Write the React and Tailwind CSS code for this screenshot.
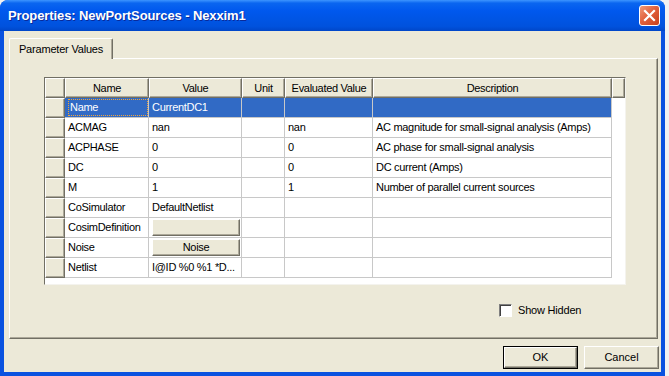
import React from "react";

const rows = [
  { name: "Name", value: "CurrentDC1", evald: "", desc: "", selected: true },
  { name: "ACMAG", value: "nan", evald: "nan", desc: "AC magnitude for small-signal analysis (Amps)" },
  { name: "ACPHASE", value: "0", evald: "0", desc: "AC phase for small-signal analysis" },
  { name: "DC", value: "0", evald: "0", desc: "DC current (Amps)" },
  { name: "M", value: "1", evald: "1", desc: "Number of parallel current sources" },
  { name: "CoSimulator", value: "DefaultNetlist", evald: "", desc: "" },
  { name: "CosimDefinition", button: "", evald: "", desc: "" },
  { name: "Noise", button: "Noise", evald: "", desc: "" },
  { name: "Netlist", value: "I@ID %0 %1 *D...", evald: "", desc: "" },
];

const headers = ["Name", "Value", "Unit", "Evaluated Value", "Description"];

// raised 3d cell like the old win32 grid headers
const Raised = ({ children, className = "" }) => (
  <div
    className={
      "bg-[#ECE9D8] border-t border-l border-t-white border-l-white border-b border-r border-b-[#716F64] border-r-[#716F64] shadow-[inset_-1px_-1px_0_#ACA899] " +
      className
    }
  >
    {children}
  </div>
);

const Cell = ({ children, sel, className = "" }) => (
  <div
    className={
      "h-[20px] border-r border-b flex items-center pl-[3px] whitespace-nowrap overflow-hidden " +
      (sel ? "bg-[#316AC5] text-white border-[#C8C8C8]" : "bg-white border-[#C8C8C8]") +
      " " +
      className
    }
  >
    {children}
  </div>
);

const Grid = () => (
  <div className="w-[582px] h-[208px] bg-white border-t border-l border-t-[#716F64] border-l-[#716F64] border-b border-r border-b-[#F4F3EE] border-r-[#F4F3EE]">
    <div className="grid grid-cols-[20px_84px_93px_43px_88px_239px_13px] text-[11px] leading-none tracking-[-0.3px]">
      <Raised className="h-[20px]" />
      {headers.map((h) => (
        <Raised key={h} className="h-[20px] flex items-center justify-center">
          {h}
        </Raised>
      ))}
      <Raised className="h-[20px]" />
      {rows.map((r) => (
        <React.Fragment key={r.name}>
          <Raised className="h-[20px]" />
          <Cell sel={r.selected} className={r.selected ? "pl-[1px]" : ""}>
            {r.selected ? (
              <span className="h-[17px] w-[81px] border border-dotted border-[#F2A53A] flex items-center pl-[1px]">
                {r.name}
              </span>
            ) : (
              r.name
            )}
          </Cell>
          {r.button !== undefined ? (
            <Cell className="pl-[3px]">
              <Raised className="w-[88px] h-[17px] flex items-center justify-center">
                {r.button}
              </Raised>
            </Cell>
          ) : (
            <Cell sel={r.selected}>{r.value}</Cell>
          )}
          <Cell sel={r.selected} />
          <Cell sel={r.selected}>{r.evald}</Cell>
          <Cell sel={r.selected}>{r.desc}</Cell>
          <div className="h-[20px] bg-white" />
        </React.Fragment>
      ))}
    </div>
  </div>
);

const Button = ({ children, def }) => (
  <div
    className={
      "w-[75px] h-[23px] flex items-center justify-center text-[11px] " +
      (def ? "border border-black" : "")
    }
  >
    <Raised className="w-full h-full flex items-center justify-center">{children}</Raised>
  </div>
);

export default function App() {
  return (
    <div
      className="w-[669px] h-[376px] bg-[#F2F2F2] flex text-black"
      style={{ fontFamily: '"Liberation Sans", Arial, sans-serif' }}
    >
      <div className="w-[665px] h-[376px] flex flex-col rounded-t-[8px] overflow-hidden bg-[#0A52E0]">
        {/* title bar */}
        <div className="h-[31px] flex items-center pl-[8px] pr-[5px] bg-[linear-gradient(to_bottom,#3D95FF_0%,#0A66F0_10%,#0058EE_35%,#0055E5_60%,#0052DD_85%,#0046C8_100%)]">
          <div className="text-white font-bold text-[13px] [text-shadow:1px_1px_0_#0A2A9A] tracking-[-0.1px]">
            Properties: NewPortSources - Nexxim1
          </div>
          <div className="ml-auto w-[21px] h-[21px] rounded-[3px] border border-white bg-[linear-gradient(135deg,#F09A7A_0%,#E2623E_45%,#C8401C_100%)] flex items-center justify-center">
            <svg width="13" height="13" viewBox="0 0 13 13">
              <path d="M2 2 L11 11 M11 2 L2 11" stroke="white" strokeWidth="2.2" strokeLinecap="square" />
            </svg>
          </div>
        </div>
        {/* client */}
        <div className="flex-1 mx-[4px] mb-[4px] bg-[#ECE9D8] flex flex-col pl-[5px] pt-[7px]">
          <div className="flex">
            <div className="w-[104px] h-[21px] border-t border-l border-white border-r border-r-[#716F64] shadow-[inset_-1px_0_0_#ACA899] rounded-t-[2px] flex items-center justify-center text-[11px] tracking-[-0.2px] relative z-10 bg-[#ECE9D8]">
              Parameter Values
            </div>
          </div>
          <div className="-mt-[1px] w-[649px] h-[281px] border-t border-l border-white border-b border-r border-b-[#716F64] border-r-[#716F64] shadow-[inset_-1px_-1px_0_#ACA899] pt-[18px] pl-[34px]">
            <Grid />
            <div className="mt-[17px] ml-[455px] flex items-center gap-[6px] text-[11px] tracking-[-0.2px]">
              <div className="w-[13px] h-[13px] bg-white border border-[#808080] border-b-white border-r-white shadow-[inset_1px_1px_0_#404040]" />
              <span>Show Hidden</span>
            </div>
          </div>
          <div className="mt-[7px] flex gap-[6px] pl-[494px]">
            <Button def>OK</Button>
            <Button>Cancel</Button>
          </div>
        </div>
      </div>
    </div>
  );
}
